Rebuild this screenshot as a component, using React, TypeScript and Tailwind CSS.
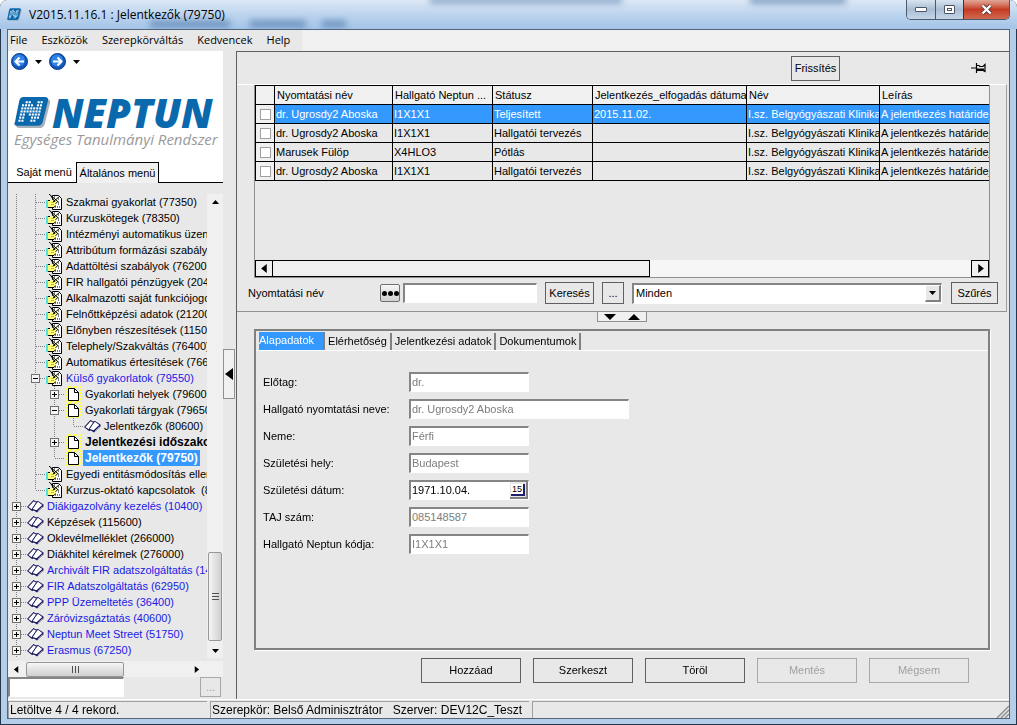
import { useState } from "react"

type TreeIcon = "hand" | "page" | "book"

type TreeItem = {
    guides: string
    icon: TreeIcon
    text: string
    className?: string
}

// guides: | line, T branch, L last branch, + collapsed, - expanded
const treeItems: TreeItem[] = [
    { guides: "|T", icon: "hand", text: "Szakmai gyakorlat (77350)" },
    { guides: "|T", icon: "hand", text: "Kurzuskötegek (78350)" },
    { guides: "|T", icon: "hand", text: "Intézményi automatikus üzenetek" },
    { guides: "|T", icon: "hand", text: "Attribútum formázási szabályok" },
    { guides: "|T", icon: "hand", text: "Adattöltési szabályok (76200)" },
    { guides: "|T", icon: "hand", text: "FIR hallgatói pénzügyek (20400)" },
    { guides: "|T", icon: "hand", text: "Alkalmazotti saját funkciójogok" },
    { guides: "|T", icon: "hand", text: "Felnőttképzési adatok (21200)" },
    { guides: "|T", icon: "hand", text: "Előnyben részesítések (1150)" },
    { guides: "|T", icon: "hand", text: "Telephely/Szakváltás (76400)" },
    { guides: "|T", icon: "hand", text: "Automatikus értesítések (76600)" },
    { guides: "|-", icon: "hand", text: "Külső gyakorlatok (79550)", className: "text-[#1a1ae6]" },
    { guides: "||+", icon: "page", text: "Gyakorlati helyek (79600)" },
    { guides: "||-", icon: "page", text: "Gyakorlati tárgyak (79650)" },
    { guides: "|||L", icon: "book", text: "Jelentkezők (80600)" },
    { guides: "||+", icon: "page", text: "Jelentkezési időszakok", className: "text-xs font-bold" },
    { guides: "||L", icon: "page", text: "Jelentkezők (79750)", className: "bg-[#3399ff] text-xs font-bold text-white" },
    { guides: "|T", icon: "hand", text: "Egyedi entitásmódosítás ellenőrzés" },
    { guides: "|L", icon: "hand", text: "Kurzus-oktató kapcsolatok  (8200)" },
    { guides: "+", icon: "book", text: "Diákigazolvány kezelés (10400)", className: "text-[#1a1ae6]" },
    { guides: "+", icon: "book", text: "Képzések (115600)" },
    { guides: "+", icon: "book", text: "Oklevélmelléklet (266000)" },
    { guides: "+", icon: "book", text: "Diákhitel kérelmek (276000)" },
    { guides: "+", icon: "book", text: "Archivált FIR adatszolgáltatás (14000)", className: "text-[#1a1ae6]" },
    { guides: "+", icon: "book", text: "FIR Adatszolgáltatás (62950)", className: "text-[#1a1ae6]" },
    { guides: "+", icon: "book", text: "PPP Üzemeltetés (36400)", className: "text-[#1a1ae6]" },
    { guides: "+", icon: "book", text: "Záróvizsgáztatás (40600)", className: "text-[#1a1ae6]" },
    { guides: "+", icon: "book", text: "Neptun Meet Street (51750)", className: "text-[#1a1ae6]" },
    { guides: "+", icon: "book", text: "Erasmus (67250)", className: "text-[#1a1ae6]" },
]

const columns = ["Nyomtatási név", "Hallgató Neptun ...", "Státusz", "Jelentkezés_elfogadás dátuma", "Név", "Leírás"]

const rows = [
    ["dr. Ugrosdy2 Aboska", "I1X1X1", "Teljesített", "2015.11.02.", "I.sz. Belgyógyászati Klinika", "A jelentkezés határideje"],
    ["dr. Ugrosdy2 Aboska", "I1X1X1", "Hallgatói tervezés", "", "I.sz. Belgyógyászati Klinika", "A jelentkezés határideje"],
    ["Marusek Fülöp", "X4HLO3", "Pótlás", "", "I.sz. Belgyógyászati Klinika", "A jelentkezés határideje"],
    ["dr. Ugrosdy2 Aboska", "I1X1X1", "Hallgatói tervezés", "", "I.sz. Belgyógyászati Klinika", "A jelentkezés határideje"],
]

const fields = [
    { id: "prefix", label: "Előtag:", value: "dr." },
    { id: "printName", label: "Hallgató nyomtatási neve:", value: "dr. Ugrosdy2 Aboska", wide: true },
    { id: "gender", label: "Neme:", value: "Férfi" },
    { id: "birthPlace", label: "Születési hely:", value: "Budapest" },
    { id: "birthDate", label: "Születési dátum:", value: "1971.10.04.", date: true },
    { id: "taj", label: "TAJ szám:", value: "085148587" },
    { id: "code", label: "Hallgató Neptun kódja:", value: "I1X1X1" },
]

const sunken = "border-t-2 border-l-2 border-r border-b border-t-[#858585] border-l-[#858585] border-r-white border-b-white bg-white"
const flatButton = "border border-[#606060] bg-[#e8e8e8] text-center disabled:border-[#a8a8a8] disabled:text-[#a0a0a0]"

function Guide({ kind }: { kind: string }) {
    const box = kind === "+" || kind === "-"
    return (
        <svg width="19" height="16" viewBox="0 0 19 16" className="shrink-0" shapeRendering="crispEdges">
            <g stroke="#808080" strokeDasharray="1 1">
                <path d={kind === "L" ? "M8.5 0V8" : "M8.5 0V16"} />
                {kind !== "|" && <path d="M9 8.5H19" />}
            </g>
            {box && (
                <>
                    <rect x="4.5" y="4.5" width="8" height="8" fill="#f4f4f4" stroke="#707070" />
                    <path d={kind === "+" ? "M6 8.5H11M8.5 6V11" : "M6 8.5H11"} stroke="#000" />
                </>
            )}
        </svg>
    )
}

function HandIcon() {
    return (
        <svg width="17" height="16" viewBox="0 0 17 16" className="shrink-0">
            <path d="M6.5 1.5H12.500L15.500 4.500V15.500H6.5Z" fill="#fff" stroke="#000" />
            <path d="M12 5h2M12 10h2M11 13h3M9 13h1M8 3h1" stroke="#000" strokeDasharray="1 1" />
            <path d="M1.500 6.500H5L8 5L11 8L9.500 9.500V11.500L8 13.500H1.500Z" fill="#ffff7a" />
            <path d="M2 13.500H8L9.500 11.500M2 6.500H4M9.500 9.500L11.500 8" fill="none" stroke="#000" />
            <path d="M3 0L13 8.500M14 2L7 8M5 2L9 8" stroke="#000" strokeWidth="1" />
            <path d="M5 8.500H8M5 10.500H8" stroke="#b8a800" strokeWidth=".7" />
            <path d="M1 6V14" stroke="#20dcdc" strokeWidth="1.500" />
        </svg>
    )
}

function PageIcon() {
    return (
        <svg width="17" height="16" viewBox="0 0 17 16" className="shrink-0">
            <rect x="2" y="1" width="13" height="14" fill="none" stroke="#ffff50" strokeWidth="2" strokeDasharray="2 1" />
            <path d="M3.500 2.500H9.500L13.500 6.500V14.500H3.500Z" fill="#fff" stroke="#000" />
            <path d="M9.500 2.500V6.500H13.500" fill="none" stroke="#000" />
        </svg>
    )
}

function BookIcon() {
    return (
        <svg width="17" height="16" viewBox="0 0 17 16" className="shrink-0">
            <path d="M0 9L6.500 2L9 3.500L11 3L16.500 6.500V8.500L10 14.500L7 12.500L5 13Z" fill="#14145a" />
            <path d="M1.400 9L6.700 3.300L9.200 4.800L4.800 11.300Z" fill="#fff" />
            <path d="M10 4.600L11.300 4.100L15.300 6.900L9.600 12.200L5.700 11Z" fill="#fff" />
            <path d="M9.300 4.800L5.300 10.800" stroke="#14145a" strokeWidth=".8" />
            <path d="M11 13.300L15.500 8.600" stroke="#fff" strokeWidth=".6" />
        </svg>
    )
}

const icons = { hand: HandIcon, page: PageIcon, book: BookIcon }

function RoundArrow({ back }: { back?: boolean }) {
    return (
        <svg width="17" height="17" viewBox="0 0 17 17">
            <circle cx="8.5" cy="8.5" r="8" fill="#1356b8" stroke="#0c3f8c" />
            <circle cx="8" cy="7.500" r="6" fill="#2f83e6" />
            <path
                d={back ? "M13 8.500H5M8.500 4.500L4.500 8.500L8.500 12.500" : "M4 8.500H12M8.500 4.500L12.500 8.500L8.500 12.500"}
                fill="none"
                stroke="#fff"
                strokeWidth="2"
            />
        </svg>
    )
}

function Triangle({ dir, className = "" }: { dir: "up" | "down" | "left" | "right"; className?: string }) {
    const points = {
        up: "0,8 4,0 8,8",
        down: "0,0 8,0 4,8",
        left: "6,0 6,8 1,4",
        right: "2,0 2,8 7,4",
    }
    return (
        <svg viewBox="0 0 8 8" preserveAspectRatio="none" className={`shrink-0 ${className}`}>
            <polygon points={points[dir]} />
        </svg>
    )
}

function LogoMark({ size, className = "" }: { size: number; className?: string }) {
    const cols = [0, 1, 2, 3, 4, 5, 6]
    // dots that draw the N inside the tile
    const dots = ["0110011", "1111011", "1111111", "1111111", "1101111", "1100111", "1100110"]
    return (
        <svg width={size} height={size} viewBox="0 0 36 32" className={`shrink-0 ${className}`}>
            <path d="M11 3H32Q36 3 35 7L30 27Q29 31 26 31H5Q1 31 2 27L7 7Q8 3 11 3Z" fill="#a8b0b8" />
            <path d="M9 1H30Q34 1 33 5L28 25Q27 29 23 29H3Q-1 29 1 25L5 5Q6 1 9 1Z" fill="#0a68ad" />
            {dots.map((line, y) =>
                cols.filter((x) => line[x] === "1").map((x) => (
                    <rect key={`${x}-${y}`} x={8.500 + x * 2.900 - y * 0.700} y={5 + y * 3} width="2" height="2" fill="#fff" />
                ))
            )}
        </svg>
    )
}

function TitleBar() {
    return (
        <header className="relative flex h-[29px] items-center overflow-hidden bg-linear-to-b from-[#dce8f5] via-[#bdd4ee] to-[#a3c4e8] pl-[7px]">
            <span className="absolute top-5 left-[150px] h-2 w-20 bg-[#4f78a8]/60 blur-[3px]" />
            <span className="absolute top-5 left-[250px] h-2 w-14 bg-[#4f78a8]/60 blur-[3px]" />
            <span className="absolute top-5 left-[322px] h-2 w-6 bg-[#4f78a8]/60 blur-[3px]" />
            <span className="absolute -top-1 left-[430px] h-2 w-48 bg-[#4f78a8]/50 blur-[3px]" />
            <span className="absolute -top-1 left-[750px] h-2 w-24 bg-[#4f78a8]/60 blur-[3px]" />
            <LogoMark size={15} />
            <h1 className="relative ml-[7px] font-['Open_Sans',sans-serif] text-xs text-black">V2015.11.16.1 : Jelentkezők (79750)</h1>
            <div className="relative ml-auto mr-[7px] flex h-5 self-start overflow-hidden rounded-b-[5px] border border-t-0 border-[#4a5b70]">
                <button aria-label="Minimize" className="grid w-7 place-content-center bg-linear-to-b from-[#d9e4f0] via-[#a9bdd3] to-[#c6d6e8]">
                    <span className="h-[5px] w-3 rounded-[1px] border border-[#4a5566] bg-white" />
                </button>
                <button aria-label="Maximize" className="grid w-7 place-content-center border-l border-[#4a5b70] bg-linear-to-b from-[#d9e4f0] via-[#a9bdd3] to-[#c6d6e8]">
                    <span className="grid h-[9px] w-[11px] place-content-center rounded-[1px] border border-[#4a5566] bg-white">
                        <span className="h-[3px] w-[5px] border border-[#4a5566]" />
                    </span>
                </button>
                <button aria-label="Close" className="grid w-[46px] place-content-center border-l border-[#5a2a20] bg-linear-to-b from-[#e0a898] via-[#c43a22] to-[#d06a50]">
                    <svg width="13" height="11" viewBox="0 0 13 11">
                        <path d="M2.500 1.500L10.500 9.500M10.500 1.500L2.500 9.500" stroke="#5a3a3a" strokeWidth="4" />
                        <path d="M2.500 1.500L10.500 9.500M10.500 1.500L2.500 9.500" stroke="#fff" strokeWidth="2.400" />
                    </svg>
                </button>
            </div>
        </header>
    )
}

function MenuBar() {
    return (
        <nav className="flex h-[21px] bg-[#f0f0f0] font-['Open_Sans',sans-serif] text-[11px]">
            <div className="flex items-center gap-[14px] bg-[#e8e8e8] pr-3 pl-[2px]">
                {["File", "Eszközök", "Szerepkörváltás", "Kedvencek", "Help"].map((item) => (
                    <button key={item}>{item}</button>
                ))}
            </div>
        </nav>
    )
}

function Sidebar() {
    return (
        <aside className="flex w-[215px] shrink-0 flex-col">
            <div className="bg-white">
                <div className="flex h-[21px] items-center gap-[7px] pl-[3px]">
                    <button aria-label="Vissza"><RoundArrow back /></button>
                    <Triangle dir="down" className="h-1 w-[7px]" />
                    <button aria-label="Előre"><RoundArrow /></button>
                    <Triangle dir="down" className="h-1 w-[7px]" />
                </div>
                <div className="flex h-[59px] items-end pl-[6px]">
                    <LogoMark size={37} />
                    <span className="ml-px font-['Open_Sans',sans-serif] text-[40px] leading-9 font-extrabold text-[#0a68ad] italic">NEPTUN</span>
                </div>
                <p className="h-[31px] pl-[6px] font-['Open_Sans',sans-serif] text-[15px] leading-4 whitespace-nowrap text-[#9a9a9a] italic">
                    Egységes Tanulmányi Rendszer
                </p>
                <div className="flex h-[21px] items-end whitespace-nowrap">
                    <button className="h-5 w-[68px] border-b border-black pl-1">Saját menü</button>
                    <button className="h-[21px] w-[83px] border border-b-0 border-black bg-[#f0f0f0]">Általános menü</button>
                    <span className="h-5 flex-1 border-b border-black" />
                </div>
            </div>
            <div className="mt-[11px] flex">
                <ul className="min-w-0 flex-1 overflow-hidden">
                    {treeItems.map((item) => {
                        const Icon = icons[item.icon]
                        return (
                            <li key={item.text} className="flex h-4 items-center whitespace-pre">
                                {item.guides.split("").map((kind, i) => (
                                    <Guide key={i} kind={kind} />
                                ))}
                                <Icon />
                                <span className={`ml-px px-[2px] leading-4 ${item.className ?? ""}`}>{item.text}</span>
                            </li>
                        )
                    })}
                </ul>
                <div className="flex w-4 shrink-0 flex-col items-center bg-[#f0f0f0]">
                    <Triangle dir="up" className="mt-[6px] h-1 w-[7px]" />
                    <span className="mt-auto grid h-[89px] w-[14px] place-content-center gap-[2px] rounded-[2px] border border-[#979797] bg-linear-to-r from-[#f6f6f6] to-[#cfcfcf]">
                        <i className="h-px w-[7px] bg-[#505050]" />
                        <i className="h-px w-[7px] bg-[#505050]" />
                        <i className="h-px w-[7px] bg-[#505050]" />
                    </span>
                    <Triangle dir="down" className="mt-2 mb-[5px] h-1 w-[7px]" />
                </div>
            </div>
            <div className="mt-[3px] flex h-4 items-center bg-[#f0f0f0] pr-[23px] pl-[5px]">
                <Triangle dir="left" className="size-[7px]" />
                <span className="ml-[6px] flex h-[15px] w-[98px] items-center justify-center gap-[2px] rounded-[2px] border border-[#979797] bg-linear-to-b from-[#f6f6f6] to-[#cfcfcf]">
                    <i className="h-[7px] w-px bg-[#505050]" />
                    <i className="h-[7px] w-px bg-[#505050]" />
                    <i className="h-[7px] w-px bg-[#505050]" />
                </span>
                <Triangle dir="right" className="ml-auto size-[7px]" />
            </div>
            <div className="flex items-center justify-between pr-[2px]">
                <input aria-label="Keresés a menüben" autoFocus className={`h-5 w-[116px] px-px outline-none ${sunken}`} />
                <button disabled aria-label="Menü keresés" className={`h-5 w-[21px] leading-3 ${flatButton}`}>...</button>
            </div>
        </aside>
    )
}

function ResultGrid() {
    return (
        <div className="flex h-[193px] flex-col overflow-hidden border border-t-0 border-[#909090]">
            <table className="w-[874px] table-fixed border-collapse">
                <colgroup>
                    <col className="w-[19px]" />
                    <col className="w-[118px]" />
                    <col className="w-[100px]" />
                    <col className="w-[100px]" />
                    <col className="w-[154px]" />
                    <col className="w-[133px]" />
                    <col className="w-[250px]" />
                </colgroup>
                <thead>
                    <tr className="h-[19px] bg-[#f0f0f0] text-left">
                        <th className="border border-black" />
                        {columns.map((column) => (
                            <th key={column} className="overflow-hidden border border-black px-[2px] py-0 leading-4 font-normal whitespace-nowrap">{column}</th>
                        ))}
                    </tr>
                </thead>
                <tbody>
                    {rows.map((row, i) => (
                        <tr key={i} className={`h-[19px] ${i === 0 ? "bg-[#3399ff] text-white" : ""}`}>
                            <td className="border border-black bg-[#f0f0f0] p-0">
                                <input
                                    type="checkbox"
                                    aria-label={row[0]}
                                    className="mx-auto block size-[11px] appearance-none border border-[#a0a0a0] bg-white"
                                />
                            </td>
                            {row.map((cell, j) => (
                                <td key={j} className="overflow-hidden border border-black px-px py-0 leading-4 whitespace-nowrap">{cell}</td>
                            ))}
                        </tr>
                    ))}
                </tbody>
            </table>
            <div className="mt-auto flex h-[17px] bg-[#f6f6f6]">
                <button aria-label="Balra" className="grid w-[18px] place-content-center border border-black bg-[#f0f0f0]">
                    <Triangle dir="left" className="size-[9px]" />
                </button>
                <span className="-ml-px w-[378px] border border-black bg-[#f0f0f0]" />
                <button aria-label="Jobbra" className="ml-auto grid w-[18px] place-content-center border border-black bg-[#f0f0f0]">
                    <Triangle dir="right" className="size-[9px]" />
                </button>
            </div>
        </div>
    )
}

function FilterRow() {
    return (
        <div className="flex items-center pl-[11px]">
            <label htmlFor="filterText" className="w-[132px]">Nyomtatási név</label>
            <button aria-label="Operátor" className="flex h-[18px] w-5 items-center justify-center gap-px rounded-[2px] border border-[#707070] bg-linear-to-b from-[#f6f6f6] to-[#cfcfcf]">
                <i className="size-[5px] rounded-full bg-black" />
                <i className="size-[5px] rounded-full bg-black" />
                <i className="size-[5px] rounded-full bg-black" />
            </button>
            <input id="filterText" className={`ml-[3px] h-5 w-[134px] px-px outline-none ${sunken}`} />
            <button className={`ml-2 h-[22px] w-[49px] ${flatButton}`}>Keresés</button>
            <button className={`ml-2 h-[22px] w-[22px] ${flatButton}`}>...</button>
            <div className="relative ml-2 h-[21px] flex-1">
                <select aria-label="Szűrő" className={`size-full appearance-none px-[2px] ${sunken}`}>
                    <option>Minden</option>
                </select>
                <span className="pointer-events-none absolute top-[2px] right-[1px] grid h-[17px] w-4 place-content-center border-t border-l border-r-2 border-b-2 border-t-white border-l-white border-r-[#808080] border-b-[#808080] bg-[#e8e8e8]">
                    <Triangle dir="down" className="h-1 w-[7px]" />
                </span>
            </div>
            <button className={`mr-2 ml-[9px] h-[22px] w-[47px] ${flatButton}`}>Szűrés</button>
        </div>
    )
}

function Details() {
    const [active, setActive] = useState("Alapadatok")
    return (
        <section className="mr-[19px] ml-[17px] flex flex-1 flex-col border-2 border-[#808080] shadow-[1px_1px_0_#fff]">
            <div className="flex h-[20px] items-end border-b border-white pl-[3px]">
                {["Alapadatok", "Elérhetőség", "Jelentkezési adatok", "Dokumentumok"].map((tab) => (
                    <button
                        key={tab}
                        onClick={() => setActive(tab)}
                        className={`border-r-2 border-[#808080] ${
                            tab === active ? "h-[18px] bg-[#3399ff] pr-[9px] pb-1 text-white" : "h-[17px] px-[3px]"
                        }`}
                    >
                        {tab}
                    </button>
                ))}
            </div>
            <div className="flex flex-col gap-[7px] pt-[21px] pl-[7px]">
                {fields.map((field) => (
                    <div key={field.id} className="flex items-center">
                        <label htmlFor={field.id} className="w-[146px]">{field.label}</label>
                        <div className="relative">
                            <input
                                id={field.id}
                                defaultValue={field.value}
                                readOnly
                                className={`block h-5 px-px pb-[2px] ${field.wide ? "w-[220px]" : "w-[120px]"} ${field.date ? "text-black" : "text-[#7d7d7d]"} ${sunken}`}
                            />
                            {field.date && (
                                <button aria-label="Naptár" className="absolute top-[2px] right-[1px] grid h-[17px] w-[18px] place-content-center border-r-2 border-b-2 border-[#808080] bg-[#e8e8e8]">
                                    <span className="h-3 w-[14px] border-r-2 border-b-2 border-[#20206a] bg-white text-center text-[9px] leading-[10px]">15</span>
                                </button>
                            )}
                        </div>
                    </div>
                ))}
            </div>
        </section>
    )
}

function Splitter() {
    return (
        <div className="flex w-[13px] shrink-0 items-start">
            <button aria-label="Menü elrejtése" className="mt-[298px] grid h-[50px] w-3 place-content-center border border-[#909090] bg-[#f0f0f0]">
                <svg width="8" height="12" viewBox="0 0 8 12"><polygon points="8,0 8,12 0,6" /></svg>
            </button>
        </div>
    )
}

function StatusBar() {
    return (
        <footer className="flex h-[19px] gap-[3px] border-t border-white pt-px text-xs leading-4">
            <span className="w-[199px] border-t border-l border-[#a0a0a0] pl-px">Letöltve 4 / 4 rekord.</span>
            <span className="w-[319px] border-t border-l border-[#a0a0a0] pl-px whitespace-pre">Szerepkör: Belső Adminisztrátor   Szerver: DEV12C_Teszt</span>
            <span className="flex flex-1 items-end justify-end border-t border-l border-[#a0a0a0]">
                <svg width="13" height="13" viewBox="0 0 13 13"><path d="M1 13L13 1M5 13L13 5M9 13L13 9" stroke="#909090" strokeWidth="1.500" /></svg>
            </span>
        </footer>
    )
}

export default function App() {
    return (
        <div className="flex min-h-screen flex-col overflow-hidden rounded-t-[7px] bg-[#b4cde8] font-['Liberation_Sans',Arial,sans-serif] text-[11px] text-black ring-1 ring-[#26364a] ring-inset">
            <TitleBar />
            <div className="mx-[7px] mb-[6px] flex flex-1 flex-col border border-[#52657c] bg-[#e8e8e8]">
                <MenuBar />
                <div className="flex flex-1">
                    <Sidebar />
                    <Splitter />
                    <main className="flex min-w-0 flex-1 flex-col border-t border-l border-[#606060]">
                        <div className="flex h-8 items-center justify-end pr-[23px]">
                            <button className={`h-[25px] w-[49px] ${flatButton}`}>Frissítés</button>
                            <button aria-label="Rögzítés" className="ml-[131px]">
                                <svg width="15" height="12" viewBox="0 0 15 12" fill="none" stroke="#000">
                                    <path d="M0 6H5M5.500 1V11M6 3.500H8L9 4.500H12L14 2.500V9.500L12 8.500H6" strokeWidth="1.200" />
                                    <path d="M6 7.500H13" strokeWidth="2" />
                                </svg>
                            </button>
                        </div>
                        <section className="mr-[2px] flex flex-col gap-1 border-t border-r border-b border-t-white border-r-[#a0a0a0] border-b-[#909090] pb-[7px]">
                            <div className="mr-4 ml-[17px]"><ResultGrid /></div>
                            <FilterRow />
                        </section>
                        <div className="flex h-[17px] items-start justify-center pr-[3px]">
                            <button aria-label="Panelek átméretezése" className="flex h-[10px] w-[50px] items-center justify-center gap-3 border border-t-0 border-[#909090] bg-[#f0f0f0]">
                                <Triangle dir="down" className="h-[6px] w-3" />
                                <Triangle dir="up" className="h-[6px] w-3" />
                            </button>
                        </div>
                        <Details />
                        <div className="flex justify-end gap-3 pt-2 pr-10 pb-4">
                            <button className={`h-[25px] w-[100px] ${flatButton}`}>Hozzáad</button>
                            <button className={`h-[25px] w-[100px] ${flatButton}`}>Szerkeszt</button>
                            <button className={`h-[25px] w-[100px] ${flatButton}`}>Töröl</button>
                            <button disabled className={`h-[25px] w-[100px] ${flatButton}`}>Mentés</button>
                            <button disabled className={`h-[25px] w-[100px] ${flatButton}`}>Mégsem</button>
                        </div>
                    </main>
                </div>
                <StatusBar />
            </div>
        </div>
    )
}
